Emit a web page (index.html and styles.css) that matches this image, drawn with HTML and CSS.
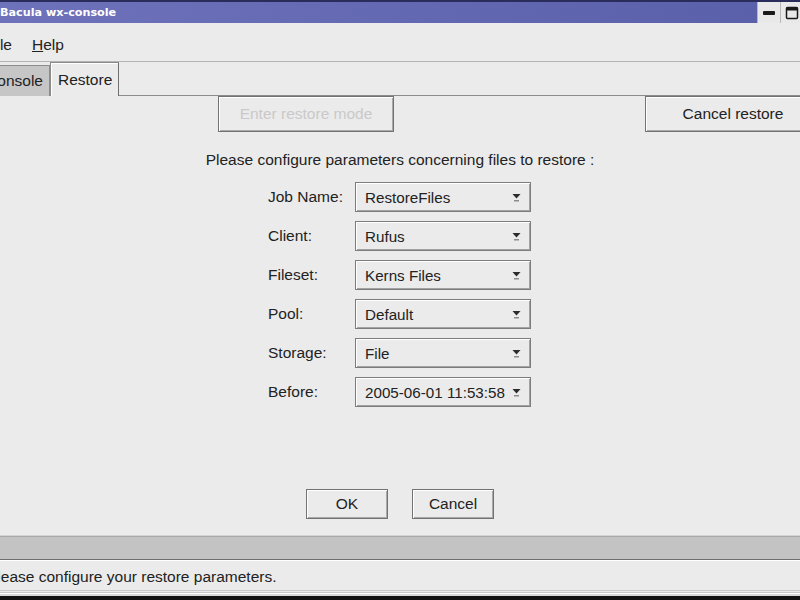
FILE: index.html
```html
<!DOCTYPE html>
<html lang="en">
<head>
    <meta charset="UTF-8">
    <title>Bacula wx-console</title>
    <link rel="stylesheet" href="styles.css">
</head>
<body>
    <div class="titlebar">
        <span class="title">Bacula wx-console</span>
        <div class="wm-buttons">
            <div class="wm-btn">
                <svg width="14" height="6" viewBox="0 0 14 6"><rect x="1" y="1" width="12" height="4" rx="1" fill="#1a1a1a"/></svg>
            </div>
            <div class="wm-btn">
                <svg width="14" height="14" viewBox="0 0 14 14"><rect x="1.5" y="1.5" width="11" height="11" rx="1" fill="none" stroke="#1a1a1a" stroke-width="1.5"/><rect x="1.5" y="1.5" width="11" height="3" fill="#1a1a1a"/></svg>
            </div>
        </div>
    </div>

    <div class="frame">
        <div class="menubar">
            <span class="menu-item">File</span>
            <span class="menu-item"><u>H</u>elp</span>
        </div>

        <div class="tabs">
            <div class="tab">Console</div>
            <div class="tab active">Restore</div>
            <div class="tab-fill"></div>
        </div>

        <div class="page">
            <div class="top-buttons">
                <button class="btn wide" disabled>Enter restore mode</button>
                <button class="btn wide cancel-restore">Cancel restore</button>
            </div>

            <p class="heading">Please configure parameters concerning files to restore :</p>

            <div class="form">
                <label>Job Name:</label>
                <div class="combo"><span>RestoreFiles</span><svg class="arrow" width="9" height="10" viewBox="0 0 9 10"><polygon points="0.5,1 8.5,1 4.5,5.5" fill="#2b2b2b"/><rect x="2" y="7" width="5" height="1.5" fill="#8c8c8c"/></svg></div>

                <label>Client:</label>
                <div class="combo"><span>Rufus</span><svg class="arrow" width="9" height="10" viewBox="0 0 9 10"><polygon points="0.5,1 8.5,1 4.5,5.5" fill="#2b2b2b"/><rect x="2" y="7" width="5" height="1.5" fill="#8c8c8c"/></svg></div>

                <label>Fileset:</label>
                <div class="combo"><span>Kerns Files</span><svg class="arrow" width="9" height="10" viewBox="0 0 9 10"><polygon points="0.5,1 8.5,1 4.5,5.5" fill="#2b2b2b"/><rect x="2" y="7" width="5" height="1.5" fill="#8c8c8c"/></svg></div>

                <label>Pool:</label>
                <div class="combo"><span>Default</span><svg class="arrow" width="9" height="10" viewBox="0 0 9 10"><polygon points="0.5,1 8.5,1 4.5,5.5" fill="#2b2b2b"/><rect x="2" y="7" width="5" height="1.5" fill="#8c8c8c"/></svg></div>

                <label>Storage:</label>
                <div class="combo"><span>File</span><svg class="arrow" width="9" height="10" viewBox="0 0 9 10"><polygon points="0.5,1 8.5,1 4.5,5.5" fill="#2b2b2b"/><rect x="2" y="7" width="5" height="1.5" fill="#8c8c8c"/></svg></div>

                <label>Before:</label>
                <div class="combo"><span>2005-06-01 11:53:58</span><svg class="arrow" width="9" height="10" viewBox="0 0 9 10"><polygon points="0.5,1 8.5,1 4.5,5.5" fill="#2b2b2b"/><rect x="2" y="7" width="5" height="1.5" fill="#8c8c8c"/></svg></div>
            </div>

            <div class="bottom-buttons">
                <button class="btn small">OK</button>
                <button class="btn small">Cancel</button>
            </div>
        </div>

        <div class="band"></div>

        <div class="statusbar">Please configure your restore parameters.</div>
    </div>
</body>
</html>
```

FILE: styles.css
```css
body {
    margin: 0;
    width: 800px;
    height: 600px;
    overflow: hidden;
    background: #111;
    font-family: "Liberation Sans", Arial, sans-serif;
    font-size: 15.5px;
    color: #222;
}
.titlebar {
    height: 21px;
    border-top: 2px solid #2a2d5c;
    background: linear-gradient(to right, #6d72bb, #5a5fa9);
    display: flex;
    align-items: center;
}
.title {
    flex: 1;
    color: #fff;
    font-family: "DejaVu Sans", sans-serif;
    font-weight: bold;
    font-size: 11.2px;
    padding-bottom: 1px;
}
.wm-buttons {
    display: flex;
    height: 100%;
    margin-right: -3px;
}
.wm-btn {
    width: 22px;
    height: 100%;
    background: #e9e9e9;
    border-left: 1px solid #b8b8b8;
    display: flex;
    align-items: center;
    justify-content: center;
}
.frame {
    margin-left: -14px;
    width: 828px;
    background: #ebebeb;
}
.menubar {
    height: 39px;
    box-sizing: border-box;
    border-bottom: 1px solid #b4b4b4;
    display: flex;
    align-items: center;
    gap: 20px;
    padding: 5px 0 0 1px;
}
.tabs {
    display: flex;
    height: 34px;
}
.tab {
    width: 64px;
    margin-top: 3px;
    background: #c6c6c6;
    border: 1px solid #8c8c8c;
    border-bottom: none;
    display: flex;
    align-items: center;
    justify-content: flex-end;
    padding-right: 6px;
    box-sizing: border-box;
}
.tab.active {
    width: 69px;
    margin-top: 0;
    background: #ebebeb;
    justify-content: flex-start;
    padding-left: 7px;
    box-shadow: inset 1px 1px #fff;
    border-right-color: #6f6f6f;
}
.tab-fill {
    flex: 1;
    border-bottom: 1px solid #8c8c8c;
}
.page {
    height: 439px;
    border-bottom: 1px solid #d4d4d4;
}
.top-buttons {
    display: flex;
    gap: 251px;
    padding-left: 232px;
}
.btn {
    font-family: inherit;
    font-size: 15.5px;
    color: #222;
    background: #ebebeb;
    border: 1px solid #727272;
    box-shadow: inset 1px 1px #fff, inset -1px -1px #a9a9a9;
    padding: 0;
}
.btn.wide {
    width: 176px;
    height: 36px;
    flex: none;
}
.btn:disabled {
    color: #c9c9c9;
}
.btn.small {
    width: 82px;
    height: 30px;
}
.heading {
    margin: 19px 0 0;
    text-align: center;
    line-height: 18px;
}
.form {
    margin: 13px 0 0 282px;
    display: grid;
    grid-template-columns: 87px 176px;
    grid-auto-rows: 30px;
    row-gap: 9px;
    align-items: center;
}
.combo {
    height: 30px;
    box-sizing: border-box;
    border: 1px solid #7c7c7c;
    box-shadow: inset 1px 1px #fff, inset -1px -1px #a3a3a3;
    display: flex;
    align-items: center;
    padding: 1px 9px 0 9px;
    font-size: 15.2px;
}
.combo span {
    flex: 1;
    white-space: nowrap;
}
.arrow {
    margin-top: 1px;
}
.bottom-buttons {
    display: flex;
    justify-content: center;
    gap: 24px;
    margin-top: 82px;
}
.band {
    height: 22px;
    background: #c3c3c3;
    border-top: 1px solid #a9a9a9;
    border-bottom: 1px solid #6e6e6e;
}
.statusbar {
    height: 33px;
    box-sizing: border-box;
    border-top: 1px solid #fff;
    border-bottom: 3px double #c8c8c8;
    box-shadow: 0 1px #fff, 0 3px #d8d8d8;
    display: flex;
    align-items: center;
    padding: 3px 0 0 1px;
}
```
